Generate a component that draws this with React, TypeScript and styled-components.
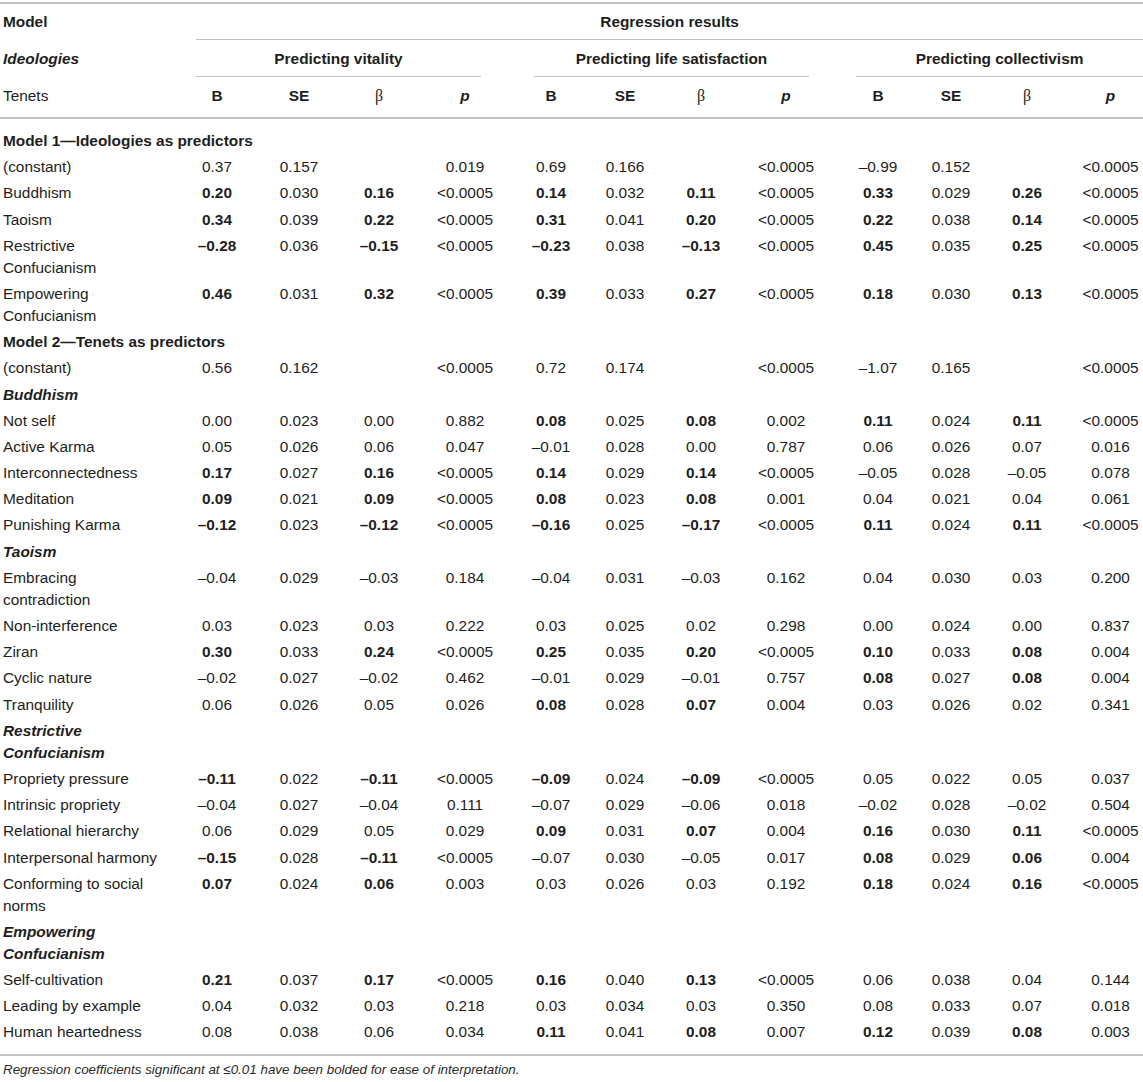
import React from "react";
import styled, { createGlobalStyle } from "styled-components";

const GlobalStyle = createGlobalStyle`
  body {
    margin: 0;
    background: #ffffff;
    font-family: "Liberation Sans", Arial, sans-serif;
    color: #1e1e1e;
  }
`;

type Row =
  | { kind: "section"; label: string }
  | { kind: "group"; label: string }
  | { kind: "data"; label: string; values: string };

// "*" marks a bolded value, "_" an empty cell
const rows: Row[] = [
  { kind: "section", label: "Model 1\u2014Ideologies as predictors" },
  { kind: "data", label: "(constant)", values: "0.37 0.157 _ 0.019 0.69 0.166 _ <0.0005 –0.99 0.152 _ <0.0005" },
  { kind: "data", label: "Buddhism", values: "*0.20 0.030 *0.16 <0.0005 *0.14 0.032 *0.11 <0.0005 *0.33 0.029 *0.26 <0.0005" },
  { kind: "data", label: "Taoism", values: "*0.34 0.039 *0.22 <0.0005 *0.31 0.041 *0.20 <0.0005 *0.22 0.038 *0.14 <0.0005" },
  { kind: "data", label: "Restrictive Confucianism", values: "*–0.28 0.036 *–0.15 <0.0005 *–0.23 0.038 *–0.13 <0.0005 *0.45 0.035 *0.25 <0.0005" },
  { kind: "data", label: "Empowering Confucianism", values: "*0.46 0.031 *0.32 <0.0005 *0.39 0.033 *0.27 <0.0005 *0.18 0.030 *0.13 <0.0005" },
  { kind: "section", label: "Model 2\u2014Tenets as predictors" },
  { kind: "data", label: "(constant)", values: "0.56 0.162 _ <0.0005 0.72 0.174 _ <0.0005 –1.07 0.165 _ <0.0005" },
  { kind: "group", label: "Buddhism" },
  { kind: "data", label: "Not self", values: "0.00 0.023 0.00 0.882 *0.08 0.025 *0.08 0.002 *0.11 0.024 *0.11 <0.0005" },
  { kind: "data", label: "Active Karma", values: "0.05 0.026 0.06 0.047 –0.01 0.028 0.00 0.787 0.06 0.026 0.07 0.016" },
  { kind: "data", label: "Interconnectedness", values: "*0.17 0.027 *0.16 <0.0005 *0.14 0.029 *0.14 <0.0005 –0.05 0.028 –0.05 0.078" },
  { kind: "data", label: "Meditation", values: "*0.09 0.021 *0.09 <0.0005 *0.08 0.023 *0.08 0.001 0.04 0.021 0.04 0.061" },
  { kind: "data", label: "Punishing Karma", values: "*–0.12 0.023 *–0.12 <0.0005 *–0.16 0.025 *–0.17 <0.0005 *0.11 0.024 *0.11 <0.0005" },
  { kind: "group", label: "Taoism" },
  { kind: "data", label: "Embracing contradiction", values: "–0.04 0.029 –0.03 0.184 –0.04 0.031 –0.03 0.162 0.04 0.030 0.03 0.200" },
  { kind: "data", label: "Non-interference", values: "0.03 0.023 0.03 0.222 0.03 0.025 0.02 0.298 0.00 0.024 0.00 0.837" },
  { kind: "data", label: "Ziran", values: "*0.30 0.033 *0.24 <0.0005 *0.25 0.035 *0.20 <0.0005 *0.10 0.033 *0.08 0.004" },
  { kind: "data", label: "Cyclic nature", values: "–0.02 0.027 –0.02 0.462 –0.01 0.029 –0.01 0.757 *0.08 0.027 *0.08 0.004" },
  { kind: "data", label: "Tranquility", values: "0.06 0.026 0.05 0.026 *0.08 0.028 *0.07 0.004 0.03 0.026 0.02 0.341" },
  { kind: "group", label: "Restrictive Confucianism" },
  { kind: "data", label: "Propriety pressure", values: "*–0.11 0.022 *–0.11 <0.0005 *–0.09 0.024 *–0.09 <0.0005 0.05 0.022 0.05 0.037" },
  { kind: "data", label: "Intrinsic propriety", values: "–0.04 0.027 –0.04 0.111 –0.07 0.029 –0.06 0.018 –0.02 0.028 –0.02 0.504" },
  { kind: "data", label: "Relational hierarchy", values: "0.06 0.029 0.05 0.029 *0.09 0.031 *0.07 0.004 *0.16 0.030 *0.11 <0.0005" },
  { kind: "data", label: "Interpersonal harmony", values: "*–0.15 0.028 *–0.11 <0.0005 –0.07 0.030 –0.05 0.017 *0.08 0.029 *0.06 0.004" },
  { kind: "data", label: "Conforming to social norms", values: "*0.07 0.024 *0.06 0.003 0.03 0.026 0.03 0.192 *0.18 0.024 *0.16 <0.0005" },
  { kind: "group", label: "Empowering Confucianism" },
  { kind: "data", label: "Self-cultivation", values: "*0.21 0.037 *0.17 <0.0005 *0.16 0.040 *0.13 <0.0005 0.06 0.038 0.04 0.144" },
  { kind: "data", label: "Leading by example", values: "0.04 0.032 0.03 0.218 0.03 0.034 0.03 0.350 0.08 0.033 0.07 0.018" },
  { kind: "data", label: "Human heartedness", values: "0.08 0.038 0.06 0.034 *0.11 0.041 *0.08 0.007 *0.12 0.039 *0.08 0.003" },
];

const colWidths = [176, 82, 82, 78, 94, 78, 70, 82, 88, 96, 50, 102, 65];

const groups = [
  { title: "Predicting vitality", ml: 20, mr: 31 },
  { title: "Predicting life satisfaction", ml: 22, mr: 21 },
  { title: "Predicting collectivism", ml: 26, mr: 0 },
];

const Page = styled.div`
  width: 1143px;
  padding-top: 2px;
`;

const Table = styled.table`
  width: 1143px;
  table-layout: fixed;
  border-collapse: separate;
  border-spacing: 0;
  border-top: 2px solid #c2c2c2;
  border-bottom: 2px solid #c2c2c2;
  font-size: 15.4px;
  line-height: 22px;
`;

const HeadCell = styled.th<{ $rule?: boolean }>`
  padding: 0;
  font-weight: normal;
  text-align: center;
  vertical-align: bottom;
  border-bottom: ${(p) => (p.$rule ? "2px solid #c2c2c2" : "none")};
`;

const HeadText = styled.div<{
  $pt: number;
  $pb: number;
  $ml?: number;
  $mr?: number;
  $lined?: boolean;
  $left?: boolean;
  $bold?: boolean;
  $italic?: boolean;
}>`
  padding: ${(p) => `${p.$pt}px 0 ${p.$pb}px ${p.$left ? 3 : 0}px`};
  margin: 0 ${(p) => p.$mr ?? 0}px 0 ${(p) => p.$ml ?? 0}px;
  border-bottom: 1px solid ${(p) => (p.$lined ? "#c2c2c2" : "transparent")};
  text-align: ${(p) => (p.$left ? "left" : "center")};
  font-weight: ${(p) => (p.$bold ? "bold" : "normal")};
  font-style: ${(p) => (p.$italic ? "italic" : "normal")};
  white-space: nowrap;
`;

const Beta = styled.span`
  font-family: "Liberation Serif", "Times New Roman", serif;
  font-size: 16px;
`;

const BodyRow = styled.tr`
  &:first-child td {
    padding-top: 11px;
  }
  &:last-child td {
    padding-bottom: 11px;
  }
`;

const LabelCell = styled.td<{ $group?: boolean }>`
  padding: 2px 18px 2.2px 3px;
  vertical-align: top;
  text-align: left;
  font-weight: ${(p) => (p.$group ? "bold" : "normal")};
  font-style: ${(p) => (p.$group ? "italic" : "normal")};
`;

const SectionCell = styled.td`
  padding: 2px 3px 2.2px;
  vertical-align: top;
  font-weight: bold;
  white-space: nowrap;
`;

const ValueCell = styled.td<{ $bold?: boolean }>`
  padding: 2px 0 2.2px;
  vertical-align: top;
  text-align: center;
  white-space: nowrap;
  font-weight: ${(p) => (p.$bold ? "bold" : "normal")};
`;

const Footnote = styled.p`
  margin: 5px 0 0;
  padding-left: 3px;
  font-size: 13.4px;
  line-height: 18px;
  font-style: italic;
  color: #2a2a2a;
`;

const DataRow = ({ label, values }: { label: string; values: string }) => (
  <BodyRow>
    <LabelCell>{label}</LabelCell>
    {values.split(" ").map((v, i) => {
      const bold = v.startsWith("*");
      const text = v === "_" ? "" : v.replace("*", "");
      return (
        <ValueCell key={i} $bold={bold}>
          {text}
        </ValueCell>
      );
    })}
  </BodyRow>
);

export default function App() {
  return (
    <Page>
      <GlobalStyle />
      <Table>
        <colgroup>
          {colWidths.map((w, i) => (
            <col key={i} style={{ width: w }} />
          ))}
        </colgroup>
        <thead>
          <tr>
            <HeadCell>
              <HeadText $pt={7} $pb={6} $left $bold>
                Model
              </HeadText>
            </HeadCell>
            <HeadCell colSpan={12}>
              <HeadText $pt={7} $pb={6} $ml={20} $lined $bold>
                Regression results
              </HeadText>
            </HeadCell>
          </tr>
          <tr>
            <HeadCell>
              <HeadText $pt={8} $pb={6} $left $bold $italic>
                Ideologies
              </HeadText>
            </HeadCell>
            {groups.map((g) => (
              <HeadCell key={g.title} colSpan={4}>
                <HeadText $pt={8} $pb={6} $ml={g.ml} $mr={g.mr} $lined $bold>
                  {g.title}
                </HeadText>
              </HeadCell>
            ))}
          </tr>
          <tr>
            <HeadCell $rule>
              <HeadText $pt={8} $pb={9} $left>
                Tenets
              </HeadText>
            </HeadCell>
            {groups.map((g) => (
              <React.Fragment key={g.title}>
                <HeadCell $rule>
                  <HeadText $pt={8} $pb={9} $bold>
                    B
                  </HeadText>
                </HeadCell>
                <HeadCell $rule>
                  <HeadText $pt={8} $pb={9} $bold>
                    SE
                  </HeadText>
                </HeadCell>
                <HeadCell $rule>
                  <HeadText $pt={8} $pb={9}>
                    <Beta>β</Beta>
                  </HeadText>
                </HeadCell>
                <HeadCell $rule>
                  <HeadText $pt={8} $pb={9} $bold $italic>
                    p
                  </HeadText>
                </HeadCell>
              </React.Fragment>
            ))}
          </tr>
        </thead>
        <tbody>
          {rows.map((r, i) => {
            if (r.kind === "section") {
              return (
                <BodyRow key={i}>
                  <SectionCell colSpan={13}>{r.label}</SectionCell>
                </BodyRow>
              );
            }
            if (r.kind === "group") {
              return (
                <BodyRow key={i}>
                  <LabelCell $group>{r.label}</LabelCell>
                  <ValueCell colSpan={12} />
                </BodyRow>
              );
            }
            return <DataRow key={i} label={r.label} values={r.values} />;
          })}
        </tbody>
      </Table>
      <Footnote>
        Regression coefficients significant at ≤0.01 have been bolded for ease of interpretation.
      </Footnote>
    </Page>
  );
}
